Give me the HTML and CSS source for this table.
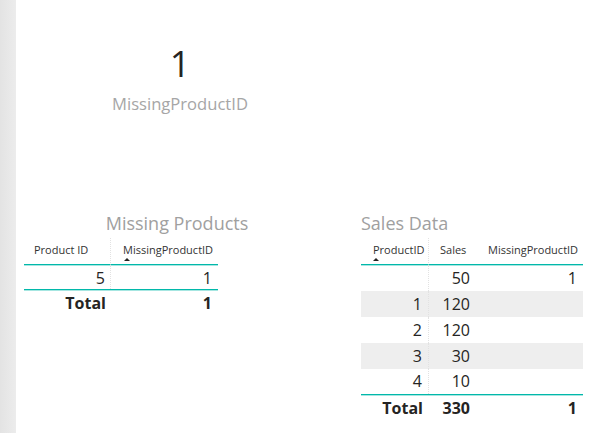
FILE: index.html
```html
<!DOCTYPE html>
<html lang="en">
<head>
<meta charset="utf-8">
<title>Missing Products</title>
<link rel="stylesheet" href="styles.css">
</head>
<body>
<div class="app">
  <div class="rail"></div>
  <main class="canvas">
    <section class="card">
      <div class="card-value">1</div>
      <div class="card-label">MissingProductID</div>
    </section>
    <div class="visuals">
      <section class="visual visual-left">
        <h2 class="visual-title title-center">Missing Products</h2>
        <table class="grid grid-left">
          <colgroup><col class="c-l1"><col class="c-l2"></colgroup>
          <thead>
            <tr>
              <th class="sep pad-l10">Product ID</th>
              <th>MissingProductID<span class="sort-arrow"></span></th>
            </tr>
          </thead>
          <tbody>
            <tr class="row-short">
              <td class="sep pr5">5</td>
              <td>1</td>
            </tr>
          </tbody>
          <tfoot>
            <tr>
              <td class="pr5">Total</td>
              <td>1</td>
            </tr>
          </tfoot>
        </table>
      </section>
      <section class="visual visual-right">
        <h2 class="visual-title">Sales Data</h2>
        <table class="grid grid-right">
          <colgroup><col class="c-r1"><col class="c-r2"><col class="c-r3"></colgroup>
          <thead>
            <tr>
              <th class="sep">ProductID<span class="sort-arrow"></span></th>
              <th class="pad-l11">Sales</th>
              <th>MissingProductID</th>
            </tr>
          </thead>
          <tbody>
            <tr><td class="sep"></td><td>50</td><td>1</td></tr>
            <tr class="stripe"><td class="sep">1</td><td>120</td><td></td></tr>
            <tr><td class="sep">2</td><td>120</td><td></td></tr>
            <tr class="stripe"><td class="sep">3</td><td>30</td><td></td></tr>
            <tr class="row-last"><td class="sep">4</td><td>10</td><td></td></tr>
          </tbody>
          <tfoot>
            <tr><td>Total</td><td>330</td><td>1</td></tr>
          </tfoot>
        </table>
      </section>
    </div>
  </main>
</div>
</body>
</html>
```

FILE: styles.css
```css
* { box-sizing: border-box; }

html, body {
  margin: 0;
  padding: 0;
  background: #ffffff;
}

body {
  font-family: "Open Sans", "Noto Sans", "Liberation Sans", sans-serif;
  color: #252423;
}

.app {
  display: flex;
  min-height: 100vh;
  width: 592px;
  overflow: hidden;
}

.rail {
  flex: 0 0 16px;
  background: linear-gradient(to right, #e3e3e3, #ececec);
}

.canvas {
  flex: 1 1 auto;
  display: flex;
  flex-direction: column;
}

/* Card visual */
.card {
  width: 328px;
  padding-top: 44px;
  text-align: center;
}

.card-value {
  font-size: 36px;
  line-height: 40px;
  font-weight: 400;
  color: #252423;
}

.card-label {
  margin-top: 10px;
  font-size: 16.6px;
  line-height: 20px;
  color: #a6a6a6;
}

/* Visuals row */
.visuals {
  margin-top: 98px;
  display: grid;
  grid-template-columns: 322px 222px;
  column-gap: 23px;
  align-items: start;
}

.visual-title {
  margin: 0 0 4px;
  font-size: 18px;
  line-height: 22px;
  font-weight: 400;
  color: #a0a0a0;
  white-space: nowrap;
}

.title-center {
  text-align: center;
}

.visual-left .grid {
  margin-left: 8px;
}

/* Tables */
.grid {
  border-collapse: separate;
  border-spacing: 0;
  table-layout: fixed;
}

.c-l1 { width: 87px; }
.c-l2 { width: 107px; }
.c-r1 { width: 68px; }
.c-r2 { width: 47px; }
.c-r3 { width: 107px; }

.grid th {
  padding: 5px 0 7px 12px;
  font-size: 11px;
  line-height: 14px;
  font-weight: 400;
  color: #333333;
  text-align: left;
  vertical-align: top;
  white-space: nowrap;
  border-bottom: 1px solid #01b8aa;
  box-shadow: 0 1px 0 rgba(1, 184, 170, 0.35);
}

.grid th.pad-l10 { padding-left: 10px; }
.grid th.pad-l11 { padding-left: 11px; }

.sort-arrow {
  display: block;
  width: 0;
  height: 0;
  margin: 1px 0 -4px 1px;
  border-left: 3px solid transparent;
  border-right: 3px solid transparent;
  border-bottom: 3px solid #252423;
}

.grid-right .sort-arrow {
  margin-left: 0;
}

.grid td {
  height: 26px;
  padding: 0 6px 0 0;
  font-size: 16px;
  line-height: 26px;
  text-align: right;
  color: #252423;
  white-space: nowrap;
}

.grid .sep {
  border-right: 1px dotted #e2e2e2;
}

.grid td.pr5 { padding-right: 5px; }

.grid-left .row-short td {
  height: 24px;
  line-height: 22px;
  padding-top: 2px;
}

.grid-right .row-last td {
  height: 25px;
  line-height: 25px;
}

.stripe td {
  background: #eeeeee;
}

.grid tfoot td {
  font-weight: 700;
  border-top: 1px solid #01b8aa;
  box-shadow: inset 0 1px 0 rgba(1, 184, 170, 0.35);
}
```
